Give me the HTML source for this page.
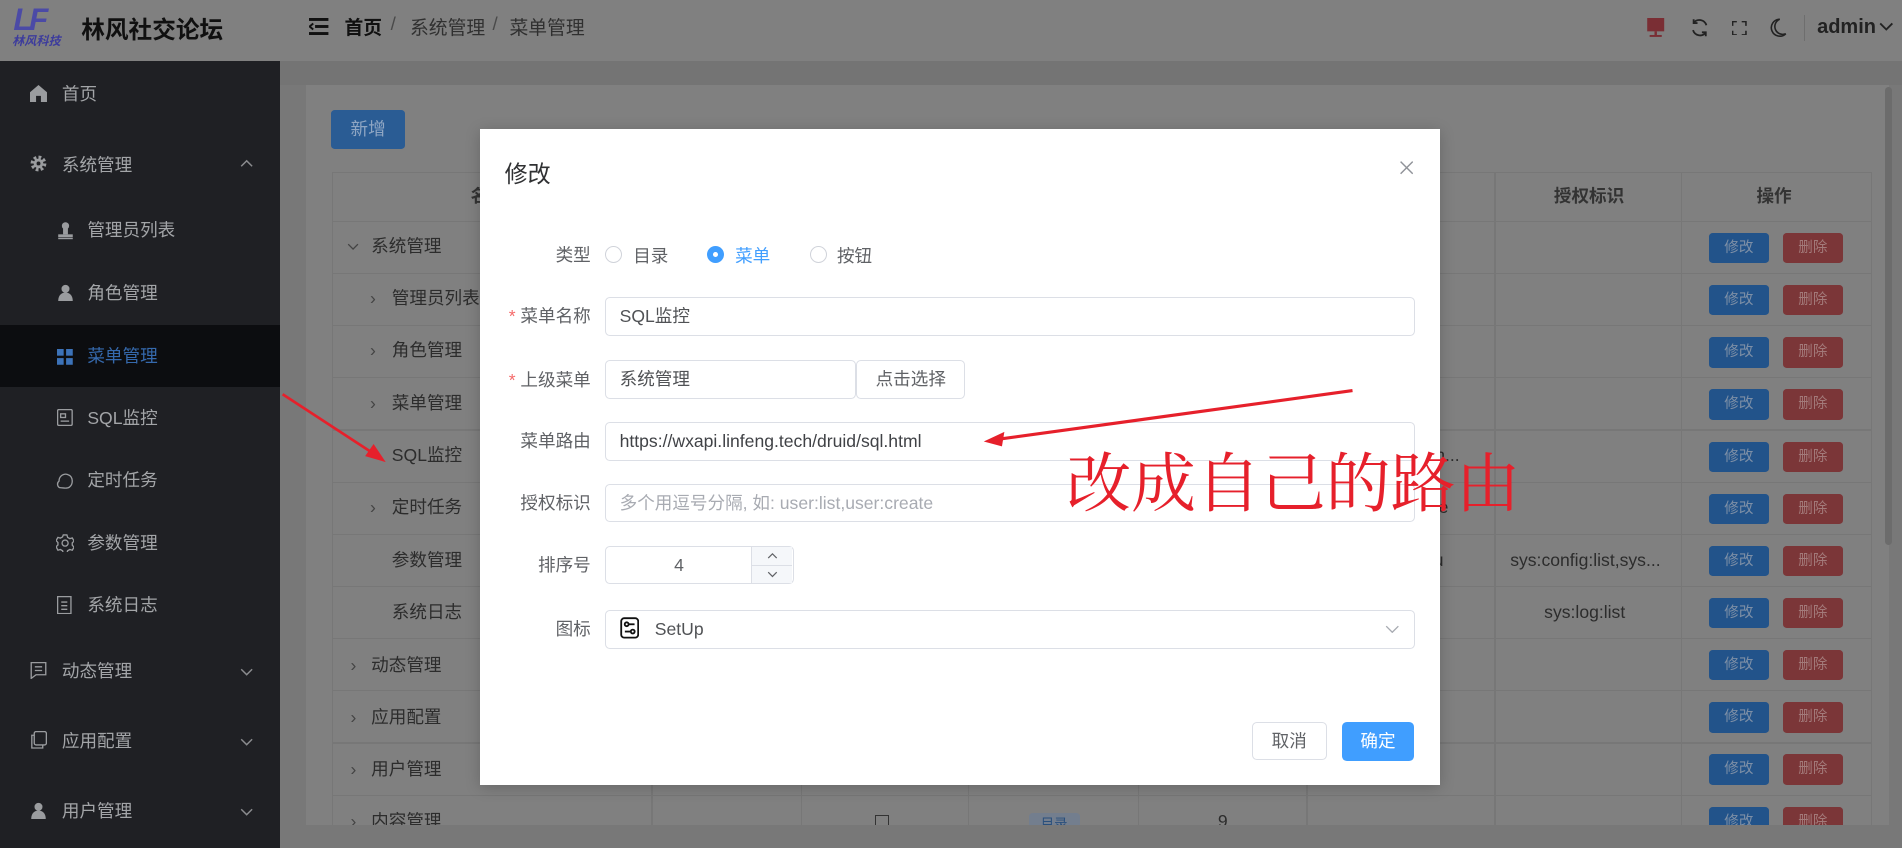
<!DOCTYPE html>
<html><head><meta charset="utf-8"><style>
html,body{margin:0;padding:0;width:1902px;height:848px;overflow:hidden;background:#787878}
#r{position:absolute;left:0;top:0;width:1568px;height:699px;zoom:1.21301;overflow:hidden;font-family:"Liberation Sans","Noto Sans CJK SC",sans-serif;background:#787878}
.a{position:absolute;white-space:nowrap}
.side{position:absolute;left:0;top:50px;width:231px;height:649px;background:#1f2024}
.si{position:absolute;color:#a3a5a8;font-size:14.5px;line-height:20px}
.td{position:absolute;color:#2c2c2c;font-size:14.5px;line-height:20px}
.bt{position:absolute;width:49px;height:25px;border-radius:3px;color:#7d8fa6;font-size:12px;line-height:25px;text-align:center}
.bb{background:#22538a}.br{background:#7b3638;color:#a37a7a}
.lbl{position:absolute;right:1081px;color:#606266;font-size:14.5px;line-height:20px;text-align:right}
.inp{position:absolute;left:499px;height:30px;border:1px solid #dcdfe6;border-radius:4px;background:#fff;color:#606266;font-size:14.5px;line-height:30px;padding-left:11px;box-sizing:content-box}
.hl{position:absolute;left:274px;width:1269px;height:1px;background:#777}
.vl{position:absolute;top:142px;width:1px;height:538px;background:#777}
</style></head><body><div id="r">
<!-- header -->
<div class="a" style="left:0;top:0;width:1568px;height:50px;background:#808080"></div>
<div class="a" style="left:11px;top:1px;font:italic bold 26px 'Liberation Sans',sans-serif;color:#4b4aa6;letter-spacing:-3px">LF</div>
<div class="a" style="left:10px;top:26px;font-size:10px;font-weight:bold;font-style:italic;color:#3d3c9c">林风科技</div>
<div class="a" style="left:67px;top:9px;font-size:19.5px;font-weight:bold;color:#101010">林风社交论坛</div>
<svg class="a" style="left:255px;top:15px" width="16" height="14"><rect x="0" y="0" width="16" height="2.4" fill="#111"/><rect x="5" y="5.8" width="11" height="2.4" fill="#111"/><rect x="0" y="11.6" width="16" height="2.4" fill="#111"/><path d="M3.5 4.5 L0.5 7 L3.5 9.5" stroke="#111" stroke-width="1.6" fill="none"/></svg>
<div class="a" style="left:284px;top:11px;font-size:15.5px;color:#111;font-weight:bold">首页</div>
<div class="a" style="left:322px;top:11px;font-size:15.5px;color:#4a4a4a">/</div>
<div class="a" style="left:338px;top:11px;font-size:15.5px;color:#303030">系统管理</div>
<div class="a" style="left:406px;top:11px;font-size:15.5px;color:#4a4a4a">/</div>
<div class="a" style="left:420px;top:11px;font-size:15.5px;color:#303030">菜单管理</div>
<svg class="a" style="left:1357px;top:15px" width="16" height="16"><rect x="1" y="0" width="14" height="11" fill="#7a2e34"/><rect x="7" y="11" width="2" height="3" fill="#7a2e34"/><rect x="3" y="14" width="10" height="1.6" fill="#7a2e34"/></svg>
<svg class="a" style="left:1393px;top:15px" width="16" height="16" fill="none" stroke="#222" stroke-width="1.5"><path d="M13.5 6A6 6 0 0 0 3 4M2.5 10A6 6 0 0 0 13 12"/><path d="M3 1v3.2h3.2M13 15v-3.2H9.8"/></svg>
<svg class="a" style="left:1428px;top:17px" width="12" height="12" fill="none" stroke="#222" stroke-width="1.3"><path d="M0.5 4V0.5H4M8 0.5h3.5V4M11.5 8v3.5H8M4 11.5H0.5V8"/></svg>
<svg class="a" style="left:1459px;top:15px" width="14" height="16" fill="none" stroke="#222" stroke-width="1.3"><path d="M8 1A7 7 0 1 0 13 13A6 6 0 0 1 8 1Z"/></svg>
<div class="a" style="left:1487px;top:12px;width:1px;height:22px;background:#6e6e6e"></div>
<div class="a" style="left:1498px;top:13px;font-size:16.5px;font-weight:bold;color:#222">admin</div>
<svg class="a" style="left:1549px;top:17px" width="12" height="10" fill="none" stroke="#222" stroke-width="1.5"><path d="M1 2l5 5 5-5"/></svg>

<!-- sidebar -->
<div class="side"></div>
<div class="a" style="left:0;top:268px;width:231px;height:51px;background:#0c0d10"></div>
<svg class="a" style="left:25px;top:70px" width="14" height="14"><path d="M7 0L0 6v8h5V9h4v5h5V6z" fill="#9a9c9f"/></svg>
<div class="si" style="left:51px;top:68px">首页</div>
<svg class="a" style="left:25px;top:128px" width="14" height="14"><circle cx="7" cy="7" r="5" fill="none" stroke="#9a9c9f" stroke-width="3" stroke-dasharray="2.2 1.7"/><circle cx="7" cy="7" r="4" fill="#9a9c9f"/><circle cx="7" cy="7" r="1.6" fill="#1f2024"/></svg>
<div class="si" style="left:51px;top:126px">系统管理</div>
<svg class="a" style="left:198px;top:131px" width="11" height="7" fill="none" stroke="#8a8b8e" stroke-width="1.2"><path d="M1 6l4.5-4.5L10 6"/></svg>
<svg class="a" style="left:47px;top:182px" width="14" height="16"><circle cx="7" cy="4" r="3" fill="#9a9c9f"/><rect x="5" y="6" width="4" height="5" fill="#9a9c9f"/><rect x="1" y="11" width="12" height="2.5" fill="#9a9c9f"/><rect x="1" y="14" width="12" height="1" fill="#9a9c9f"/></svg>
<div class="si" style="left:72px;top:180px">管理员列表</div>
<svg class="a" style="left:47px;top:234px" width="14" height="14"><circle cx="7" cy="4" r="3.3" fill="#9a9c9f"/><path d="M1 14c0-5 3-7 6-7s6 2 6 7z" fill="#9a9c9f"/></svg>
<div class="si" style="left:72px;top:232px">角色管理</div>
<svg class="a" style="left:47px;top:288px" width="13" height="13" fill="#3c72b8"><rect x="0" y="0" width="5.5" height="5.5"/><rect x="7.5" y="0" width="5.5" height="5.5"/><rect x="0" y="7.5" width="5.5" height="5.5"/><rect x="7.5" y="7.5" width="5.5" height="5.5"/></svg>
<div class="si" style="left:72px;top:284px;color:#3569ad">菜单管理</div>
<svg class="a" style="left:47px;top:337px" width="13" height="14" fill="none" stroke="#9a9c9f" stroke-width="1.1"><rect x="0.5" y="0.5" width="12" height="13" rx="1"/><rect x="3" y="4" width="4" height="3"/><path d="M3 10h7"/></svg>
<div class="si" style="left:72px;top:335px">SQL监控</div>
<svg class="a" style="left:46px;top:389px" width="15" height="14" fill="none" stroke="#9a9c9f" stroke-width="1.1"><path d="M4 13C1 13 0.5 9 2.5 7.5C2.5 3 7 0.5 10.5 2.5C14 4 14.5 10 11 12.5C9 14 6 13 4 13Z"/></svg>
<div class="si" style="left:72px;top:386px">定时任务</div>
<svg class="a" style="left:46px;top:440px" width="15" height="15" fill="none" stroke="#9a9c9f" stroke-width="1.1"><circle cx="7.5" cy="7.5" r="2.5"/><path d="M6 0.8h3l.6 2 1.8 1 2-.6 1.5 2.6-1.5 1.5v2l1.5 1.5-1.5 2.6-2-.6-1.8 1-.6 2H6l-.6-2-1.8-1-2 .6L.1 10.5l1.5-1.5v-2L.1 5.4 1.6 2.8l2 .6 1.8-1z"/></svg>
<div class="si" style="left:72px;top:438px">参数管理</div>
<svg class="a" style="left:47px;top:491px" width="12" height="15" fill="none" stroke="#9a9c9f" stroke-width="1.1"><rect x="0.5" y="0.5" width="11" height="14"/><path d="M3.5 5h5M3.5 8h5M3.5 11h5"/></svg>
<div class="si" style="left:72px;top:489px">系统日志</div>
<svg class="a" style="left:25px;top:546px" width="14" height="14" fill="none" stroke="#9a9c9f" stroke-width="1.1"><path d="M1 0.5h12v10H5l-4 3z"/><path d="M4 4h6M4 7h6"/></svg>
<div class="si" style="left:51px;top:543px">动态管理</div>
<svg class="a" style="left:198px;top:551px" width="11" height="7" fill="none" stroke="#8a8b8e" stroke-width="1.2"><path d="M1 1l4.5 4.5L10 1"/></svg>
<svg class="a" style="left:25px;top:603px" width="14" height="15" fill="none" stroke="#9a9c9f" stroke-width="1.1"><rect x="3.5" y="0.5" width="10" height="11" rx="1.5"/><path d="M3.5 3.5H1.5v10.5h9v-2"/></svg>
<div class="si" style="left:51px;top:601px">应用配置</div>
<svg class="a" style="left:198px;top:608px" width="11" height="7" fill="none" stroke="#8a8b8e" stroke-width="1.2"><path d="M1 1l4.5 4.5L10 1"/></svg>
<svg class="a" style="left:25px;top:661px" width="14" height="14"><circle cx="7" cy="4" r="3.3" fill="#9a9c9f"/><path d="M1 14c0-5 3-7 6-7s6 2 6 7z" fill="#9a9c9f"/></svg>
<div class="si" style="left:51px;top:659px">用户管理</div>
<svg class="a" style="left:198px;top:666px" width="11" height="7" fill="none" stroke="#8a8b8e" stroke-width="1.2"><path d="M1 1l4.5 4.5L10 1"/></svg>

<!-- content -->
<div class="a" style="left:231px;top:50px;width:1337px;height:20px;background:#747474"></div>
<div class="a" style="left:252px;top:70px;width:1305px;height:610px;background:#808080"></div>
<div class="a" style="left:1554px;top:72px;width:6px;height:377px;border-radius:3px;background:#6c6c6c"></div>
<div class="a" style="left:273px;top:91px;width:61px;height:32px;border-radius:3px;background:#2a5c94;color:#8fa6c3;font-size:14.5px;line-height:32px;text-align:center">新增</div>
<!-- table -->
<div class="a" style="left:274px;top:142px;width:1269px;height:538px;border:1px solid #777;border-bottom:none;box-sizing:border-box"></div>
<div class="a" style="left:274px;top:142px;width:1269px;height:40px;border-bottom:1px solid #777"></div>
<div class="vl" style="left:537px"></div><div class="vl" style="left:660px"></div><div class="vl" style="left:798px"></div><div class="vl" style="left:938px"></div><div class="vl" style="left:1077px"></div><div class="vl" style="left:1232px"></div><div class="vl" style="left:1386px"></div>
<div class="a" style="left:1281px;top:151px;font-size:14.5px;font-weight:bold;color:#333">授权标识</div>
<div class="a" style="left:1448px;top:151px;font-size:14.5px;font-weight:bold;color:#333">操作</div>
<div class="a" style="left:388px;top:151px;font-size:14.5px;font-weight:bold;color:#333">名</div>
<div class="hl" style="top:225px"></div><div class="hl" style="top:268px"></div><div class="hl" style="top:311px"></div><div class="hl" style="top:354px"></div><div class="hl" style="top:397px"></div><div class="hl" style="top:440px"></div><div class="hl" style="top:483px"></div><div class="hl" style="top:526px"></div><div class="hl" style="top:569px"></div><div class="hl" style="top:612px"></div><div class="hl" style="top:655px"></div>

<div class="bt bb" style="left:1409px;top:192px">修改</div><div class="bt br" style="left:1470px;top:192px">删除</div>
<div class="bt bb" style="left:1409px;top:235px">修改</div><div class="bt br" style="left:1470px;top:235px">删除</div>
<div class="bt bb" style="left:1409px;top:278px">修改</div><div class="bt br" style="left:1470px;top:278px">删除</div>
<div class="bt bb" style="left:1409px;top:321px">修改</div><div class="bt br" style="left:1470px;top:321px">删除</div>
<div class="bt bb" style="left:1409px;top:364px">修改</div><div class="bt br" style="left:1470px;top:364px">删除</div>
<div class="bt bb" style="left:1409px;top:407px">修改</div><div class="bt br" style="left:1470px;top:407px">删除</div>
<div class="bt bb" style="left:1409px;top:450px">修改</div><div class="bt br" style="left:1470px;top:450px">删除</div>
<div class="bt bb" style="left:1409px;top:493px">修改</div><div class="bt br" style="left:1470px;top:493px">删除</div>
<div class="bt bb" style="left:1409px;top:536px">修改</div><div class="bt br" style="left:1470px;top:536px">删除</div>
<div class="bt bb" style="left:1409px;top:579px">修改</div><div class="bt br" style="left:1470px;top:579px">删除</div>
<div class="bt bb" style="left:1409px;top:622px">修改</div><div class="bt br" style="left:1470px;top:622px">删除</div>
<div class="bt bb" style="left:1409px;top:665px">修改</div><div class="bt br" style="left:1470px;top:665px">删除</div>

<svg class="a" style="left:286px;top:200px" width="10" height="6" fill="none" stroke="#444" stroke-width="1.1"><path d="M1 1l4 4 4-4"/></svg>
<div class="td" style="left:306px;top:193px">系统管理</div>
<div class="td" style="left:305px;top:236px;color:#444">›</div><div class="td" style="left:323px;top:236px">管理员列表</div>
<div class="td" style="left:305px;top:279px;color:#444">›</div><div class="td" style="left:323px;top:279px">角色管理</div>
<div class="td" style="left:305px;top:322px;color:#444">›</div><div class="td" style="left:323px;top:322px">菜单管理</div>
<div class="td" style="left:323px;top:365px">SQL监控</div>
<div class="td" style="left:305px;top:408px;color:#444">›</div><div class="td" style="left:323px;top:408px">定时任务</div>
<div class="td" style="left:323px;top:452px">参数管理</div>
<div class="td" style="left:323px;top:495px">系统日志</div>
<div class="td" style="left:289px;top:538px;color:#444">›</div><div class="td" style="left:306px;top:538px">动态管理</div>
<div class="td" style="left:289px;top:581px;color:#444">›</div><div class="td" style="left:306px;top:581px">应用配置</div>
<div class="td" style="left:289px;top:624px;color:#444">›</div><div class="td" style="left:306px;top:624px">用户管理</div>
<div class="td" style="left:1180px;top:365px">in...</div>
<div class="td" style="left:1186px;top:408px">e</div>
<div class="td" style="left:1182px;top:452px">u</div>
<div class="td" style="left:1245px;top:452px">sys:config:list,sys...</div>
<div class="td" style="left:1273px;top:495px">sys:log:list</div>
<div class="a" style="left:231px;top:680px;width:1337px;height:19px;background:#787878"></div>
<div class="td" style="left:289px;top:667px;color:#444;height:13px;overflow:hidden">›</div><div class="td" style="left:306px;top:667px;height:13px;overflow:hidden">内容管理</div>
<div class="a" style="left:721px;top:672px;width:12px;height:8px;border:1px solid #333;border-bottom:none;box-sizing:border-box"></div>
<div class="a" style="left:848px;top:670px;width:42px;height:10px;background:#737e8e;border-radius:3px 3px 0 0;overflow:hidden;font-size:11px;color:#294f7c;text-align:center;line-height:18px">目录</div>
<div class="td" style="left:1004px;top:667px;height:13px;overflow:hidden">9</div>

<!-- modal -->
<div class="a" style="left:396px;top:106px;width:791px;height:541px;background:#fff;box-shadow:0 2px 12px rgba(0,0,0,.2)"></div>
<div class="a" style="left:416px;top:128px;font-size:19px;color:#303133">修改</div>
<svg class="a" style="left:1154px;top:133px" width="11" height="11" stroke="#909399" stroke-width="1.2"><path d="M0.5 0.5l10 10M10.5 0.5l-10 10"/></svg>

<div class="lbl" style="top:200px">类型</div>
<div class="a" style="left:499px;top:203px;width:14px;height:14px;border:1px solid #d0d3da;border-radius:50%;box-sizing:border-box"></div>
<div class="a" style="left:522px;top:200px;font-size:14.5px;color:#606266">目录</div>
<div class="a" style="left:583px;top:203px;width:14px;height:14px;background:#409eff;border-radius:50%"></div>
<div class="a" style="left:588px;top:208px;width:4px;height:4px;background:#fff;border-radius:50%"></div>
<div class="a" style="left:606px;top:200px;font-size:14.5px;color:#409eff">菜单</div>
<div class="a" style="left:668px;top:203px;width:14px;height:14px;border:1px solid #d0d3da;border-radius:50%;box-sizing:border-box"></div>
<div class="a" style="left:690px;top:200px;font-size:14.5px;color:#606266">按钮</div>

<div class="lbl" style="top:251px"><span style="color:#f56c6c">* </span>菜单名称</div>
<div class="inp" style="top:245px;width:655px;color:#505255">SQL监控</div>
<div class="lbl" style="top:303px"><span style="color:#f56c6c">* </span>上级菜单</div>
<div class="inp" style="top:297px;width:194px;color:#505255">系统管理</div>
<div class="a" style="left:706px;top:297px;width:88px;height:30px;border:1px solid #dcdfe6;border-radius:4px;font-size:14.5px;line-height:30px;text-align:center;color:#606266">点击选择</div>
<div class="lbl" style="top:354px">菜单路由</div>
<div class="inp" style="top:348px;width:655px;color:#404246">https://wxapi.linfeng.tech/druid/sql.html</div>
<div class="lbl" style="top:405px">授权标识</div>
<div class="inp" style="top:399px;width:655px;color:#a8abb2">多个用逗号分隔, 如: user:list,user:create</div>
<div class="lbl" style="top:456px">排序号</div>
<div class="inp" style="top:450px;padding-left:0;width:154px"><span style="position:absolute;left:0;width:120px;text-align:center">4</span></div>
<div class="a" style="left:619px;top:451px;width:1px;height:30px;background:#dcdfe6"></div>
<div class="a" style="left:620px;top:451px;width:33px;height:15px;background:#f5f7fa"></div>
<div class="a" style="left:620px;top:466px;width:33px;height:1px;background:#dcdfe6"></div>
<div class="a" style="left:620px;top:467px;width:33px;height:14px;background:#f5f7fa"></div>
<svg class="a" style="left:632px;top:455px" width="9" height="6" fill="none" stroke="#606266" stroke-width="1"><path d="M1 5l3.5-3.5L8 5"/></svg>
<svg class="a" style="left:632px;top:471px" width="9" height="6" fill="none" stroke="#606266" stroke-width="1"><path d="M1 1l3.5 3.5L8 1"/></svg>
<div class="lbl" style="top:509px">图标</div>
<div class="inp" style="top:503px;padding-left:40px;width:626px;color:#505255">SetUp</div>
<svg class="a" style="left:511px;top:509px" width="16" height="18" fill="none" stroke="#111" stroke-width="1.5"><rect x="1" y="1" width="14" height="16" rx="2.5"/><circle cx="5.5" cy="6" r="1.6"/><path d="M7 6h5"/><circle cx="10.5" cy="12" r="1.6"/><path d="M4 12h5"/></svg>
<svg class="a" style="left:1142px;top:515px" width="12" height="7" fill="none" stroke="#a8abb2" stroke-width="1.1"><path d="M1 1l5 5 5-5"/></svg>

<div class="a" style="left:1032px;top:595px;width:60px;height:30px;border:1px solid #dcdfe6;border-radius:4px;font-size:14.5px;line-height:30px;text-align:center;color:#606266">取消</div>
<div class="a" style="left:1106px;top:595px;width:60px;height:32px;background:#409eff;border-radius:4px;font-size:14.5px;line-height:32px;text-align:center;color:#fff">确定</div>

<!-- annotations -->
<div class="a" style="left:879px;top:361px;font-family:'Noto Serif CJK SC','Liberation Serif',serif;font-size:53.5px;line-height:66px;color:#e6202b">改成自己的路由</div>
<svg class="a" style="left:0;top:0" width="1568" height="699">
<path d="M1115 322 L824 362" stroke="#e6202b" stroke-width="2.6" fill="none"/>
<path d="M811 364 L828 356 L826 368 Z" fill="#e6202b"/>
<path d="M233 325 L308 374" stroke="#e6202b" stroke-width="2.2" fill="none"/>
<path d="M318 381 L301 376 L308 366 Z" fill="#e6202b"/>
</svg>
</div></body></html>
